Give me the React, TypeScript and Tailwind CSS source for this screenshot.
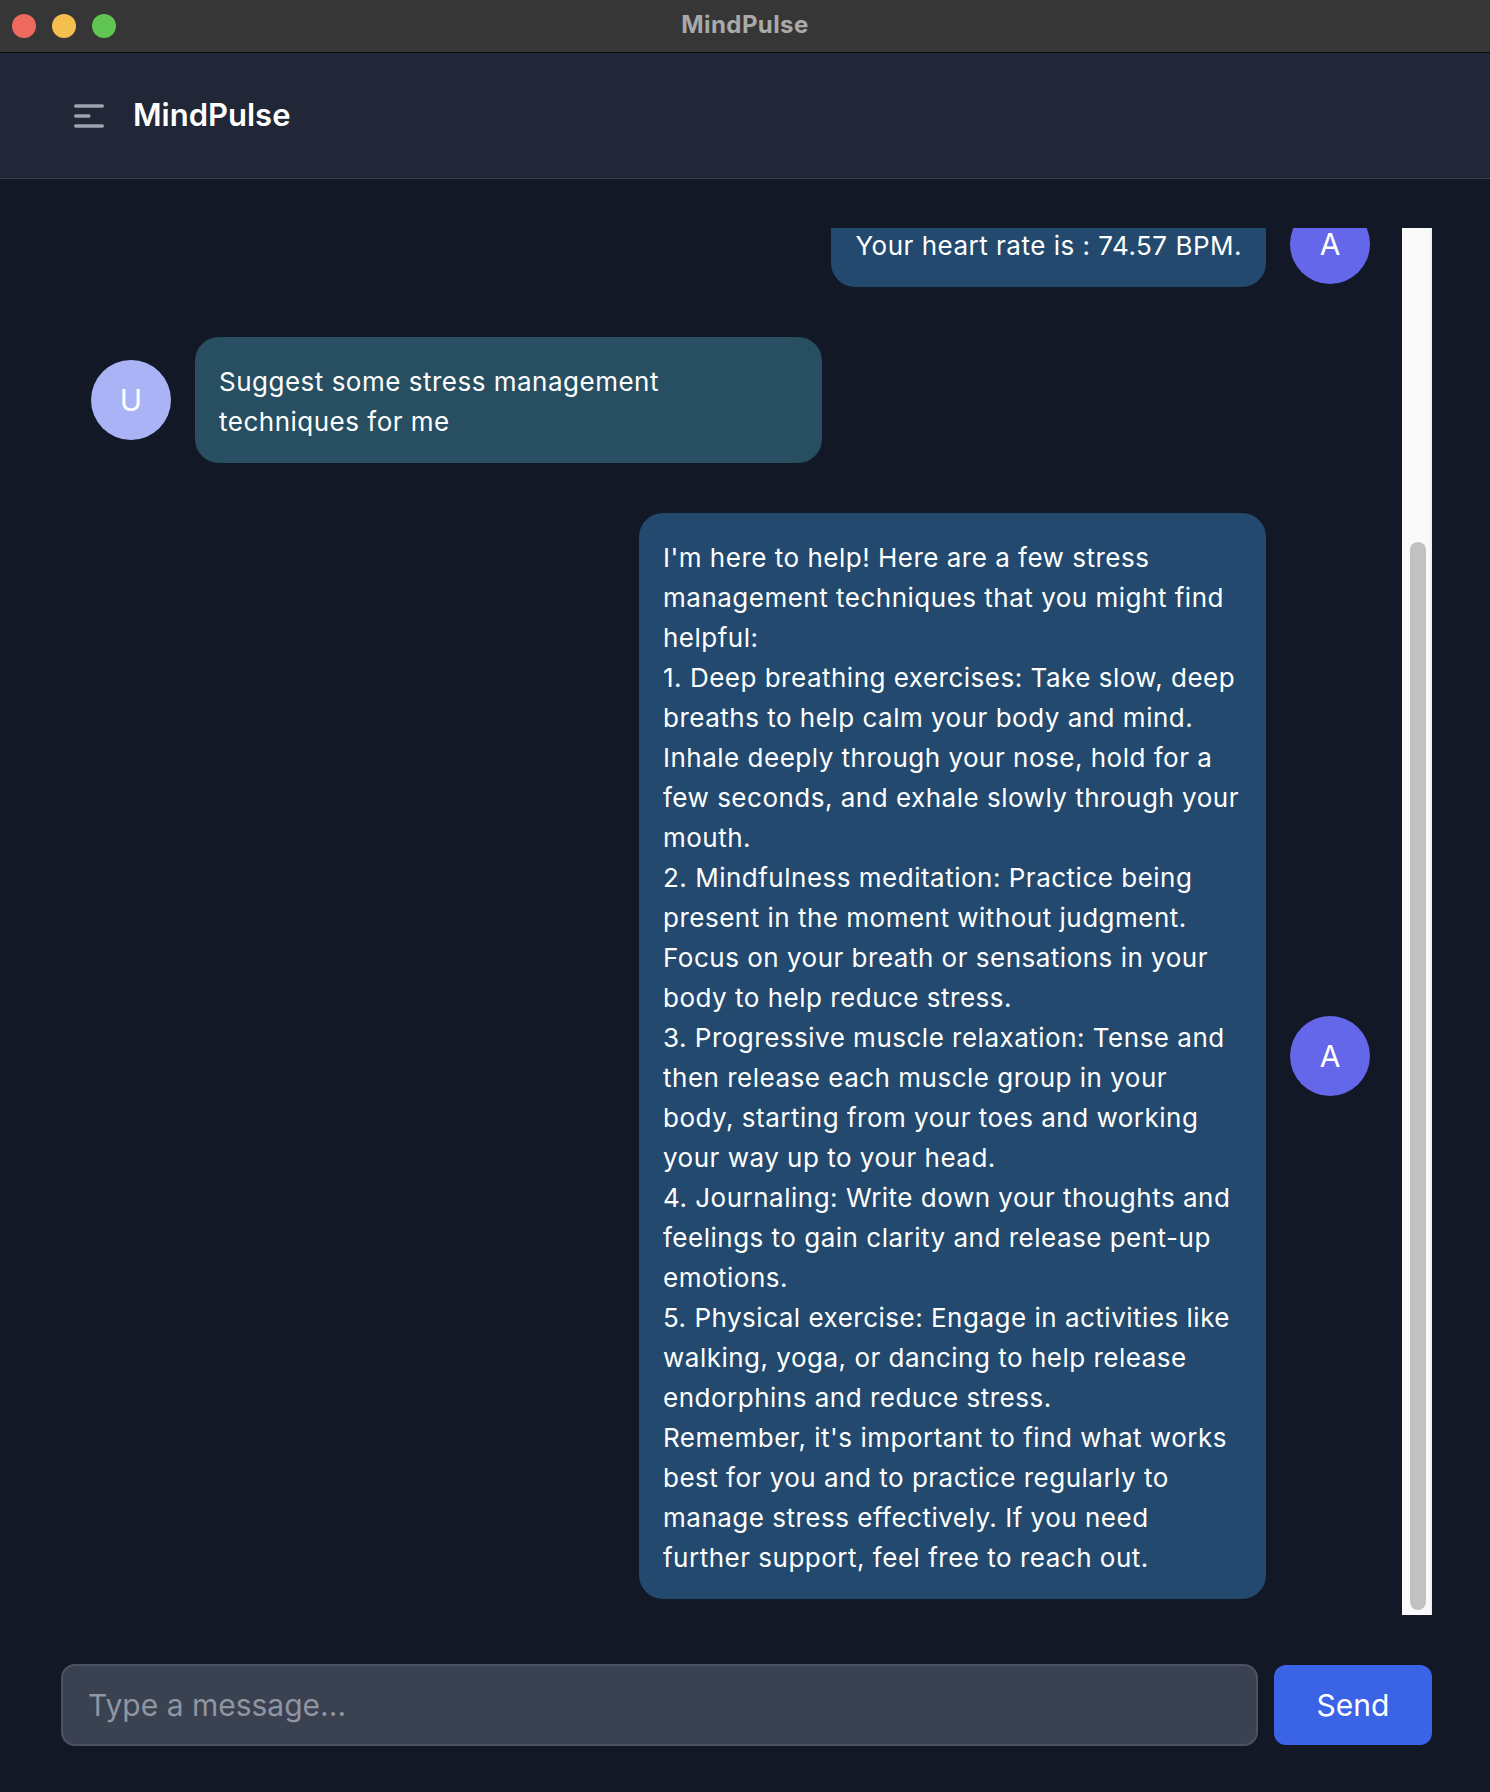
import React from 'react';

const reply = `I'm here to help! Here are a few stress management techniques that you might find helpful:
1. Deep breathing exercises: Take slow, deep breaths to help calm your body and mind. Inhale deeply through your nose, hold for a few seconds, and exhale slowly through your mouth.
2. Mindfulness meditation: Practice being present in the moment without judgment. Focus on your breath or sensations in your body to help reduce stress.
3. Progressive muscle relaxation: Tense and then release each muscle group in your body, starting from your toes and working your way up to your head.
4. Journaling: Write down your thoughts and feelings to gain clarity and release pent-up emotions.
5. Physical exercise: Engage in activities like walking, yoga, or dancing to help release endorphins and reduce stress.
Remember, it's important to find what works best for you and to practice regularly to manage stress effectively. If you need further support, feel free to reach out.`;

type Msg = { from: 'user' | 'bot'; text: string };

const messages: Msg[] = [
  { from: 'bot', text: 'Your heart rate is : 74.57 BPM.' },
  { from: 'user', text: 'Suggest some stress management techniques for me' },
  { from: 'bot', text: reply },
];

const Avatar = ({ who }: { who: 'user' | 'bot' }) => (
  <div
    className={`w-20 h-20 shrink-0 rounded-full flex items-center justify-center text-white text-[30px] ${
      who === 'user' ? 'bg-[#a9b3f6]' : 'bg-[#6467e9]'
    }`}
  >
    {who === 'user' ? 'U' : 'A'}
  </div>
);

const Bubble = ({ msg }: { msg: Msg }) => (
  <div
    className={`max-w-[627px] rounded-3xl px-6 pt-[25px] pb-[21px] text-[26px] tracking-[0.5px] leading-[40px] text-white whitespace-pre-line ${
      msg.from === 'user' ? 'bg-[#284f61]' : 'bg-[#234a6e]'
    }`}
  >
    {msg.text}
  </div>
);

const App = () => {
  return (
    <div
      className="w-full h-[1792px] flex flex-col bg-[#121826] overflow-hidden"
      style={{ fontFamily: 'Inter, "Noto Sans", sans-serif' }}
    >
      {/* window title bar */}
      <div className="h-[53px] shrink-0 grid grid-cols-[1fr_auto_1fr] items-center bg-[#363636] border-b border-[#0b0b0b]">
        <div className="flex items-center gap-4 pl-3">
          <span className="w-6 h-6 rounded-full bg-[#ee6a5f]" />
          <span className="w-6 h-6 rounded-full bg-[#f5bf4f]" />
          <span className="w-6 h-6 rounded-full bg-[#61c554]" />
        </div>
        <div className="text-[24px] font-bold text-[#a9a9a9] -mt-[3px] tracking-[0.4px]">MindPulse</div>
        <div />
      </div>

      {/* app header */}
      <header className="h-[126px] shrink-0 flex items-center gap-6 pl-[69px] bg-[#212736] border-b border-[#394150]">
        <button className="w-10 h-10 text-[#9ea3b0]">
          <svg viewBox="0 0 24 24" className="w-10 h-10" fill="none" stroke="currentColor" strokeWidth={2} strokeLinecap="round">
            <path d="M4 6h16M4 12h8m-8 6h16" />
          </svg>
        </button>
        <h1 className="text-[31px] font-semibold text-white">MindPulse</h1>
      </header>

      {/* chat */}
      <main className="flex-1 min-h-0 flex flex-col gap-[49px] pl-[61px] pr-[58px] pt-[49px] pb-[46px]">
        <div className="flex-1 min-h-0 flex">
          <div className="flex-1 min-w-0 overflow-hidden flex flex-col justify-end gap-[50px] pl-[30px] pr-[32px] pb-[16px]">
            {messages.map((m, i) =>
              m.from === 'user' ? (
                <div key={i} className="shrink-0 flex items-center gap-6">
                  <Avatar who="user" />
                  <Bubble msg={m} />
                </div>
              ) : (
                <div key={i} className="shrink-0 flex items-center justify-end gap-6">
                  <Bubble msg={m} />
                  <Avatar who="bot" />
                </div>
              )
            )}
          </div>
          <div className="w-[30px] shrink-0 bg-[#f9f9f9] border-r-2 border-[#efefef] flex flex-col justify-end pb-[5px] pl-2">
            <div className="w-4 h-[1068px] rounded-full bg-[#c1c1c1]" />
          </div>
        </div>

        <div className="shrink-0 flex items-center gap-4">
          <input
            placeholder="Type a message..."
            className="flex-1 h-[82px] rounded-[14px] bg-[#3a4151] border-2 border-[#4b5262] pl-[25px] text-[30px] text-white placeholder:text-[#8f95a1] outline-none"
          />
          <button className="w-[158px] h-[80px] rounded-xl bg-[#3a63e5] text-white text-[30px]">Send</button>
        </div>
      </main>
    </div>
  );
};

export default App;
